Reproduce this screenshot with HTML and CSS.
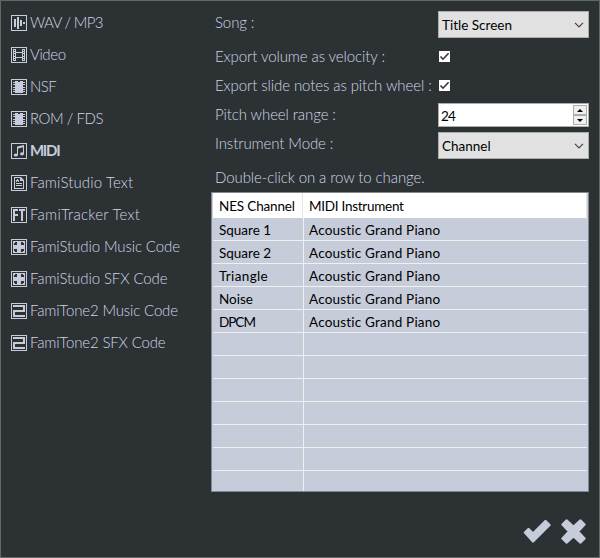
FILE: index.html
```html
<!DOCTYPE html>
<html lang="en">
<head>
<meta charset="utf-8">
<title>Export</title>
<link rel="stylesheet" href="styles.css">
</head>
<body>
<svg class="defs" width="0" height="0">
  <defs>
    <symbol id="frame" viewBox="0 0 16 16"><path d="M0 0H16V16H0ZM1 1V15H15V1Z" fill-rule="evenodd"/></symbol>
    <symbol id="wave" viewBox="0 0 16 16"><path d="M3 4h2v8H3ZM6 2h2v12H6ZM9 5h2v6H9ZM12 7h2v2h-2Z"/></symbol>
    <symbol id="film" viewBox="0 0 16 16"><path d="M2 2h1v12H2ZM4 2h1v12H4ZM11 2h1v12h-1ZM13 2h1v12h-1ZM5 5h6v1H5ZM5 10h6v1H5ZM3 2h1v1H3ZM3 4h1v1H3ZM3 6h1v1H3ZM3 9h1v1H3ZM3 11h1v1H3ZM3 13h1v1H3ZM12 2h1v1h-1ZM12 4h1v1h-1ZM12 6h1v1h-1ZM12 9h1v1h-1ZM12 11h1v1h-1ZM12 13h1v1h-1Z"/></symbol>
    <symbol id="chip" viewBox="0 0 16 16"><path d="M4 2h3v1h2V2h3v1h2v1h-2v1h2v1h-2v2h2v1h-2v1h2v1h-2v1h2v1h-2v1H4v-1H2v-1h2v-1H2v-1h2V9H2V8h2V6H2V5h2V4H2V3h2Z"/></symbol>
    <symbol id="note" viewBox="0 0 16 16"><path d="M6 3.6 13 2v2L7 5.4V12H6ZM12 3h1v8h-1Z"/><ellipse cx="4.8" cy="12" rx="2.1" ry="1.6"/><ellipse cx="11" cy="10.8" rx="2" ry="1.6"/></symbol>
    <symbol id="doc" viewBox="0 0 16 16"><path d="M3 2h7l3 3v9H3ZM4 3v10h8V6H9V3Z" fill-rule="evenodd"/><path d="M5 6V5h1V4h1v1h1v2H7V6H6v1H5ZM5 8h6v1H5ZM5 10h6v1H5Z"/></symbol>
    <symbol id="ft" viewBox="0 0 16 16"><path d="M2 2h5v2H4v3h3v2H4v5H2ZM8 2h6v2h-2v10h-2V4H8Z"/></symbol>
    <symbol id="cross" viewBox="0 0 16 16"><path d="M2 2h12v12H2ZM3 3v3h3V3ZM10 3v3h3V3ZM3 10v3h3v-3ZM10 10v3h3v-3Z" fill-rule="evenodd"/><path d="M3 3h1v1H3ZM12 3h1v1h-1ZM3 12h1v1H3ZM12 12h1v1h-1Z"/></symbol>
    <symbol id="two" viewBox="0 0 16 16"><path d="M2 2h12v7H4v3h10v2H2V7h10V4H2Z"/></symbol>
    <symbol id="tick" viewBox="0 0 11 11"><path d="M1.5 5.5 4 8.2 9.6 2.3" fill="none" stroke="#333" stroke-width="1.6"/></symbol>
    <symbol id="chevron" viewBox="0 0 10 6"><path d="M1 .8 5 4.8 9 .8" fill="none" stroke="#444" stroke-width="1.2"/></symbol>
  </defs>
</svg>
<main class="dialog">
  <nav class="formats">
    <div class="format"><svg class="icon"><use href="#frame"/><use href="#wave"/></svg><span class="t1">WAV / MP3</span></div>
    <div class="format"><svg class="icon"><use href="#frame"/><use href="#film"/></svg><span class="t2">Video</span></div>
    <div class="format"><svg class="icon"><use href="#frame"/><use href="#chip"/></svg><span class="t3">NSF</span></div>
    <div class="format"><svg class="icon"><use href="#frame"/><use href="#chip"/></svg><span class="t4">ROM / FDS</span></div>
    <div class="format selected"><svg class="icon"><use href="#frame"/><use href="#note"/></svg><span class="t5">MIDI</span></div>
    <div class="format"><svg class="icon"><use href="#frame"/><use href="#doc"/></svg><span class="t6">FamiStudio Text</span></div>
    <div class="format"><svg class="icon"><use href="#frame"/><use href="#ft"/></svg><span class="t7">FamiTracker Text</span></div>
    <div class="format"><svg class="icon"><use href="#frame"/><use href="#cross"/></svg><span class="t8">FamiStudio Music Code</span></div>
    <div class="format"><svg class="icon"><use href="#frame"/><use href="#cross"/></svg><span class="t8">FamiStudio SFX Code</span></div>
    <div class="format"><svg class="icon"><use href="#frame"/><use href="#two"/></svg><span class="t9">FamiTone2 Music Code</span></div>
    <div class="format"><svg class="icon"><use href="#frame"/><use href="#two"/></svg><span class="t9">FamiTone2 SFX Code</span></div>
  </nav>
  <section class="panel">
    <div class="props">
      <label class="p1">Song :</label>
      <div class="combo"><span>Title Screen</span><svg class="chevron"><use href="#chevron"/></svg></div>
      <label class="p2">Export volume as velocity :</label>
      <div class="check"><svg><use href="#tick"/></svg></div>
      <label class="p2">Export slide notes as pitch wheel :</label>
      <div class="check"><svg><use href="#tick"/></svg></div>
      <label class="p2">Pitch wheel range :</label>
      <div class="number"><span>24</span><div class="spin"><i class="up"></i><i class="down"></i></div></div>
      <label class="p1">Instrument Mode :</label>
      <div class="combo"><span>Channel</span><svg class="chevron"><use href="#chevron"/></svg></div>
    </div>
    <p class="hint">Double-click on a row to change.</p>
    <div class="grid">
      <div class="row head"><div><span class="h1">NES Channel</span></div><div><span class="h2">MIDI Instrument</span></div></div>
      <div class="row"><div>Square 1</div><div>Acoustic Grand Piano</div></div>
      <div class="row"><div>Square 2</div><div>Acoustic Grand Piano</div></div>
      <div class="row"><div><span class="wide">Triangle</span></div><div>Acoustic Grand Piano</div></div>
      <div class="row"><div>Noise</div><div>Acoustic Grand Piano</div></div>
      <div class="row"><div><span class="tight">DPCM</span></div><div>Acoustic Grand Piano</div></div>
      <div class="row"><div></div><div></div></div>
      <div class="row"><div></div><div></div></div>
      <div class="row"><div></div><div></div></div>
      <div class="row"><div></div><div></div></div>
      <div class="row"><div></div><div></div></div>
      <div class="row"><div></div><div></div></div>
      <div class="row last"><div></div><div></div></div>
    </div>
    <div class="actions">
      <svg width="28" height="24" viewBox="0 0 28 24"><path d="M2 13.5 5.5 10 10 14.5 22.5 2 26.5 6 10 22.5Z"/></svg>
      <svg width="25" height="25" viewBox="0 0 25 25"><path d="M5.5 1.5 12.5 8 19.5 1.5 23.5 5.5 17 12.5 23.5 19.5 19.5 23.5 12.5 17 5.5 23.5 1.5 19.5 8 12.5 1.5 5.5Z"/></svg>
    </div>
  </section>
</main>
</body>
</html>
```
FILE: styles.css
```css
* { box-sizing: border-box; }
body { margin: 0; font-family: Lato, "Liberation Sans", sans-serif; font-weight: 300; }
.defs { display: block; position: absolute; }
.dialog { width: 600px; height: 558px; border: 1px solid #646667; background: #2c3134; color: #d0d6e4; display: flex; }
.formats { width: 210px; padding: 6px 0 0 10px; font-size: 15px; }
.format { height: 32px; display: flex; align-items: center; gap: 3px; white-space: nowrap; }
.format span { padding-bottom: 2px; }
.icon { width: 16px; height: 16px; fill: #c6ccda; flex: none; }
.selected { font-weight: 700; color: #c6ccda; }
.t1 { letter-spacing: -0.65px; }
.t2 { letter-spacing: -0.4px; }
.t3 { letter-spacing: -0.6px; }
.t4 { letter-spacing: -0.45px; }
.t5 { letter-spacing: -1.3px; }
.t6 { letter-spacing: 0.13px; }
.t7 { letter-spacing: 0.25px; }
.t8 { letter-spacing: -0.1px; }
.t9 { letter-spacing: -0.16px; }

.panel { width: 378px; }
.props { display: grid; grid-template-columns: 227px 151px; grid-template-rows: 31px 29px 29px 32px 27px; padding-top: 10px; }
label { padding-left: 4px; font-size: 15px; line-height: 18px; letter-spacing: -0.09px; white-space: nowrap; }
.p1 { padding-top: 2px; }
.p2 { padding-top: 5px; }
.combo { height: 27px; border: 1px solid #adadad; background: #e1e1e1; color: #000; display: flex; align-items: center; justify-content: space-between; padding: 0 3px; font-size: 13.5px; font-weight: 400; }
.chevron { width: 10px; height: 6px; margin-right: 1px; }
.check { width: 11px; height: 11px; background: #fff; margin: 9px 0 0 1px; }
.check svg { display: block; width: 11px; height: 11px; }
.number { height: 24px; margin-top: 3px; border: 1px solid #adadad; background: #fff; color: #000; display: flex; justify-content: space-between; padding: 1px 1px 1px 2px; font-size: 13.5px; line-height: 22px; font-weight: 400; letter-spacing: -0.8px; }
.spin { width: 14px; display: flex; flex-direction: column; }
.spin i { flex: 1; border: 1px solid #adadad; background: #f0f0f0; display: flex; align-items: center; justify-content: center; }
.spin i::after { content: ""; border: 3px solid transparent; }
.spin .up::after { border-top: 0; border-bottom-color: #000; }
.spin .down::after { border-bottom: 0; border-top-color: #000; }

.hint { margin: 0; height: 33px; padding: 9px 0 0 4px; font-size: 15px; line-height: 18px; letter-spacing: -0.09px; white-space: nowrap; }
.grid { height: 300px; border: 1px solid #828790; background: #c6ccda; color: #000; font-size: 13.5px; font-weight: 400; padding: 0 1px; overflow: hidden; }
.row { height: 23px; display: grid; grid-template-columns: 91px 1fr; border-bottom: 1px solid #f0f0f0; line-height: 24px; }
.row div { padding-left: 6px; border-right: 1px solid #f0f0f0; white-space: nowrap; }
.row div + div { padding-left: 5px; border: 0; letter-spacing: 0.2px; }
.head { height: 25px; background: #fff; border-bottom: 0; line-height: 26px; grid-template-columns: 90px 1fr; }
.head div { border-color: #e5e5e5; }
.head div + div { padding-left: 6px; border-right: 1px solid #e5e5e5; }
.h1 { letter-spacing: -0.15px; }
.h2 { letter-spacing: -0.27px; }
.wide { letter-spacing: 0.35px; }
.tight { letter-spacing: -1px; }
.last { height: 20px; border-bottom: 0; }

.actions { display: flex; justify-content: flex-end; gap: 10px; padding: 27px 3px 0 0; fill: #c6ccda; }
.actions svg { stroke: #c6ccda; stroke-width: 2.4; stroke-linejoin: round; }
```
